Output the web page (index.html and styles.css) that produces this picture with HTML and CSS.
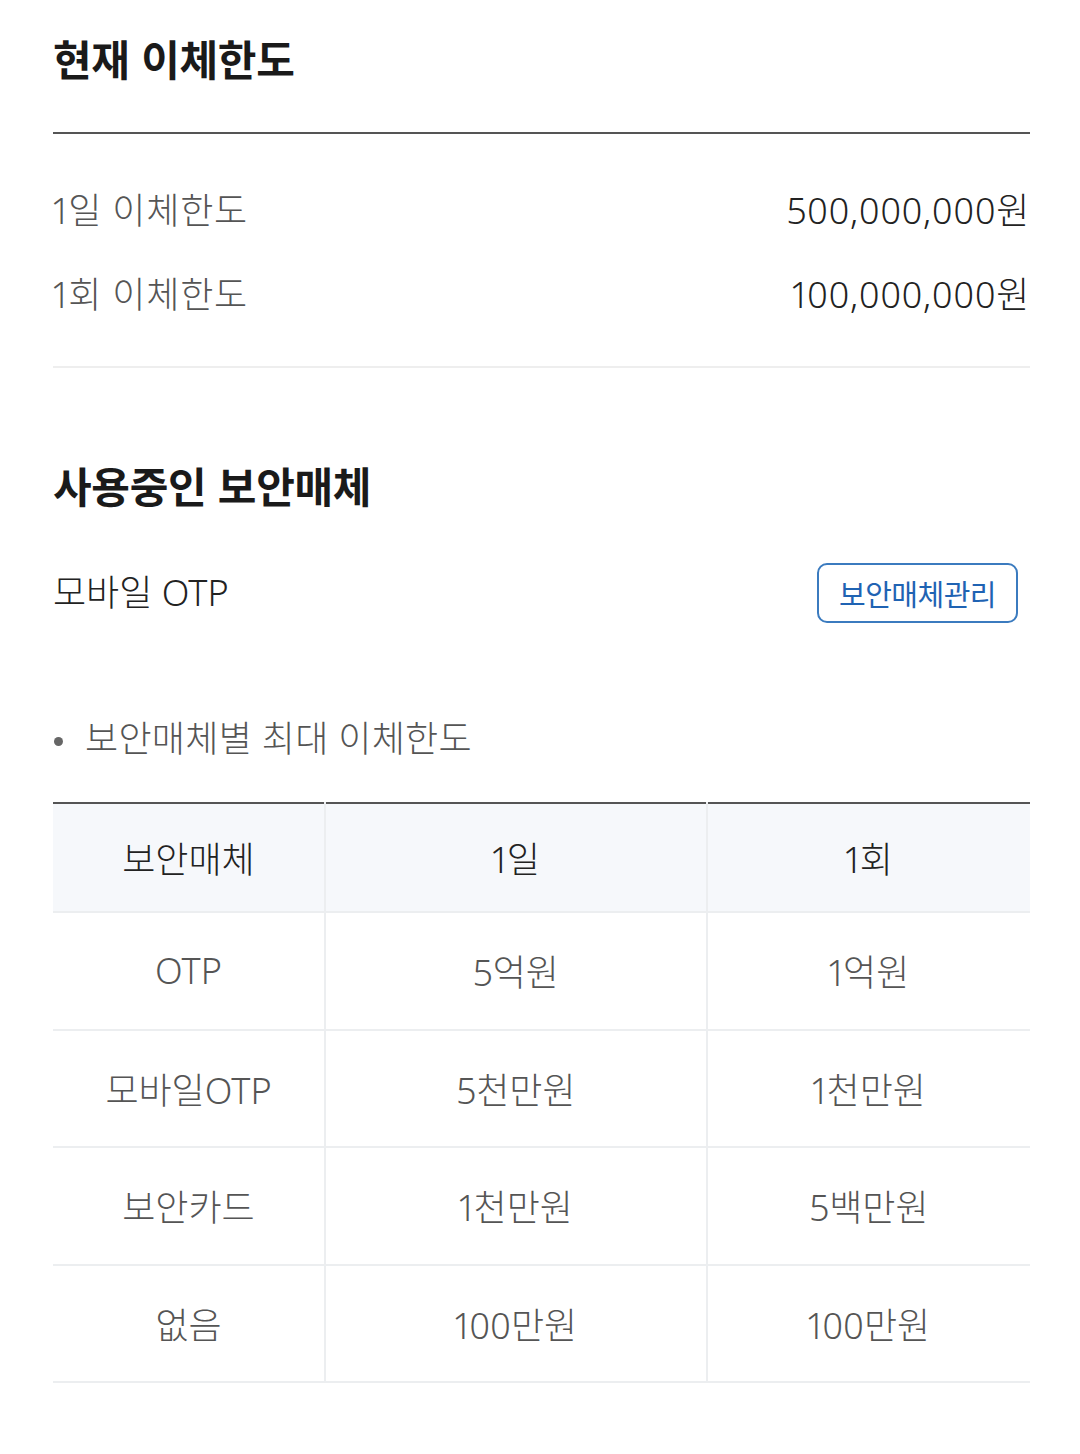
FILE: index.html
```html
<!DOCTYPE html>
<html lang="ko">
<head>
<meta charset="utf-8">
<link rel="stylesheet" href="styles.css">
</head>
<body>
<main class="page">
  <section class="limit">
    <h2 class="title title-first">현재 이체한도</h2>
    <div class="limit-list">
      <div class="limit-row"><span class="label">1일 이체한도</span><span class="value">500,000,000원</span></div>
      <div class="limit-row"><span class="label">1회 이체한도</span><span class="value">100,000,000원</span></div>
    </div>
  </section>

  <section class="media">
    <h2 class="title title-second">사용중인 보안매체</h2>
    <div class="media-row">
      <span class="media-name">모바일 OTP</span>
      <button class="manage-btn" type="button">보안매체관리</button>
    </div>
    <p class="bullet">보안매체별 최대 이체한도</p>
    <table class="limit-table">
      <colgroup><col class="c1"><col class="c2"><col class="c3"></colgroup>
      <thead>
        <tr><th>보안매체</th><th>1일</th><th>1회</th></tr>
      </thead>
      <tbody>
        <tr><td>OTP</td><td>5억원</td><td>1억원</td></tr>
        <tr><td>모바일OTP</td><td>5천만원</td><td>1천만원</td></tr>
        <tr><td>보안카드</td><td>1천만원</td><td>5백만원</td></tr>
        <tr><td>없음</td><td>100만원</td><td>100만원</td></tr>
      </tbody>
    </table>
  </section>
</main>
</body>
</html>
```

FILE: styles.css
```css
* { box-sizing: border-box; }
html, body { margin: 0; padding: 0; background: #fff; }
body {
  font-family: "Noto Sans", "Noto Sans CJK KR", sans-serif;
  font-weight: 300;
  font-variant-numeric: proportional-nums;
  color: #222;
}
.page { padding: 0 50px 0 53px; }

.title {
  margin: 0;
  font-family: "Noto Sans CJK KR", sans-serif;
  font-size: 42px;
  font-weight: 700;
  line-height: 60px;
  color: #1a1a1a;
  letter-spacing: -0.3px;
}
.title-first {
  padding-top: 28px;
  padding-bottom: 44px;
  border-bottom: 2px solid #555;
}
.limit-list {
  padding: 32px 0;
  border-bottom: 2px solid #eeeeee;
}
.limit-row {
  height: 84px;
  display: flex;
  align-items: center;
  justify-content: space-between;
  font-size: 36px;
}
.label { color: #555; letter-spacing: 0.8px; }
.value { color: #222; letter-spacing: 0.6px; }

.title-second { margin-top: 87px; }
.media-row {
  margin-top: 47px;
  height: 62px;
  display: flex;
  align-items: center;
  justify-content: space-between;
}
.media-name {
  font-size: 36px;
  color: #222;
  margin-top: -6px;
}
.manage-btn {
  margin-right: 12px;
  width: 201px;
  height: 60px;
  border: 2px solid #3b7bbf;
  border-radius: 10px;
  background: #fff;
  color: #1f63b3;
  font-family: inherit;
  font-weight: 400;
  font-size: 29px;
  letter-spacing: -0.5px;
  padding: 0;
}

.bullet {
  margin: 85px 0 0;
  position: relative;
  padding-left: 32px;
  font-size: 36px;
  line-height: 60px;
  color: #555;
  letter-spacing: 0.3px;
}
.bullet::before {
  content: "";
  position: absolute;
  left: 1px;
  top: 28px;
  width: 9px;
  height: 9px;
  border-radius: 50%;
  background: #666;
}

.limit-table {
  margin-top: 33px;
  width: 100%;
  border-collapse: collapse;
  table-layout: fixed;
  border-top: 2px solid #555;
  border-bottom: 2px solid #eceef0;
}
.c1 { width: 272px; }
.c2 { width: 382px; }
.c3 { width: 323px; }
.limit-table th,
.limit-table td {
  text-align: center;
  font-size: 36px;
  padding: 0;
  border-left: 2px solid #eceef0;
}
.limit-table th:first-child,
.limit-table td:first-child { border-left: none; }
.limit-table th {
  height: 109px;
  background: #f6f8fb;
  font-weight: 300;
  color: #222;
  border-bottom: 2px solid #eceef0;
}
.limit-table td {
  height: 117.5px;
  color: #555;
  border-top: 2px solid #eceef0;
}
```
